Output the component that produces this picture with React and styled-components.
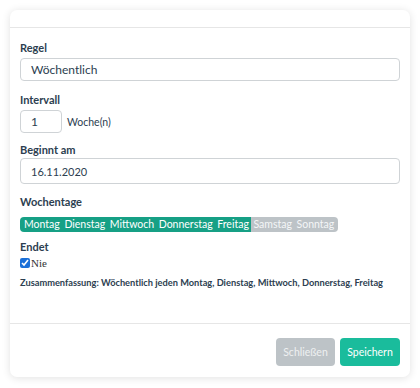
import styled, { createGlobalStyle } from "styled-components"

const Global = createGlobalStyle`
body {
  margin: 0;
  background: #fff;
  font-family: Lato, "Liberation Sans", sans-serif;
  color: #2c3e50;
}
`

const Card = styled.div`
margin: 10px;
width: 400px;
height: 367px;
border-radius: 7px;
background: #fff;
box-shadow: 0 1px 8px rgba(0,0,0,0.12);
display: flex;
flex-direction: column;
`

const Header = styled.div`
height: 17px;
border-bottom: 1px solid #e6e6e6;
`

const Body = styled.div`
flex: 1;
padding: 13px 10px 0 10px;
border-bottom: 1px solid #e6e6e6;
`

const Group = styled.div`
margin-bottom: ${p => p.mb ?? 11}px;
`

const Label = styled.div`
font-size: 11px;
font-weight: 700;
line-height: 14px;
margin-bottom: ${p => p.mb ?? 3}px;
`

const Input = styled.div`
box-sizing: border-box;
height: ${p => p.h || 24}px;
width: ${p => p.w || "100%"};
border: 1px solid #cfd3d6;
border-radius: 4px;
padding-left: 10px;
display: flex;
align-items: center;
font-size: ${p => p.fs || 13}px;
color: #2c3e50;
`

const Row = styled.div`
display: flex;
align-items: center;
gap: 5px;
font-size: 10.5px;
`

const Days = styled.div`
display: inline-flex;
border-radius: 4px;
overflow: hidden;
height: 15px;
`

const Day = styled.span`
background: ${p => (p.on ? "#16a085" : "#bdc3c7")};
color: ${p => (p.on ? "#fff" : "#f4f6f7")};
font-size: 10.5px;
line-height: 15px;
padding: 0 2.3px;
&:first-child { padding-left: 4px; }
&:last-child { padding-right: 4px; }
`

const Check = styled.label`
display: flex;
align-items: center;
gap: 1px;
font-family: "Liberation Serif", serif;
font-size: 11px;
color: #333;
input {
  margin: 0;
  width: 10px;
  height: 10px;
  accent-color: #1a6fd8;
}
`

const Summary = styled.div`
font-size: 9.25px;
font-weight: 700;
margin-top: 8px;
white-space: nowrap;
`

const Footer = styled.div`
height: 53px;
display: flex;
justify-content: flex-end;
align-items: flex-start;
gap: 5px;
padding: 14px 10px 0 0;
box-sizing: border-box;
`

const Button = styled.button`
height: 28px;
width: ${p => (p.primary ? 60 : 59)}px;
padding: 0;
border: none;
border-radius: 4px;
font-family: Lato, "Liberation Sans", sans-serif;
font-size: 10.5px;
background: ${p => (p.primary ? "#1abc9c" : "#bdc3c7")};
color: ${p => (p.primary ? "#fff" : "#eef0f1")};
`

const days = [
  ["Montag", true],
  ["Dienstag", true],
  ["Mittwoch", true],
  ["Donnerstag", true],
  ["Freitag", true],
  ["Samstag", false],
  ["Sonntag", false],
]

export default function App() {
  return (
    <>
      <Global />
      <Card>
        <Header />
        <Body>
          <Group mb={12}>
            <Label>Regel</Label>
            <Input h={23} fs={12}>Wöchentlich</Input>
          </Group>
          <Group mb={10}>
            <Label>Intervall</Label>
            <Row>
              <Input w="42px" h={23} fs={12}>1</Input>
              <span>Woche(n)</span>
            </Row>
          </Group>
          <Group mb={11}>
            <Label mb={1}>Beginnt am</Label>
            <Input h={26} fs={11}>16.11.2020</Input>
          </Group>
          <Group mb={8}>
            <Label mb={3}>Wochentage</Label>
            <Days>
              {days.map(([d, on]) => (
                <Day key={d} on={on ? 1 : 0}>{d}</Day>
              ))}
            </Days>
          </Group>
          <Group mb={0}>
            <Label mb={3}>Endet</Label>
            <Check>
              <input type="checkbox" defaultChecked /> Nie
            </Check>
          </Group>
          <Summary>
            Zusammenfassung: Wöchentlich jeden Montag, Dienstag, Mittwoch, Donnerstag, Freitag
          </Summary>
        </Body>
        <Footer>
          <Button>Schließen</Button>
          <Button primary>Speichern</Button>
        </Footer>
      </Card>
    </>
  )
}
